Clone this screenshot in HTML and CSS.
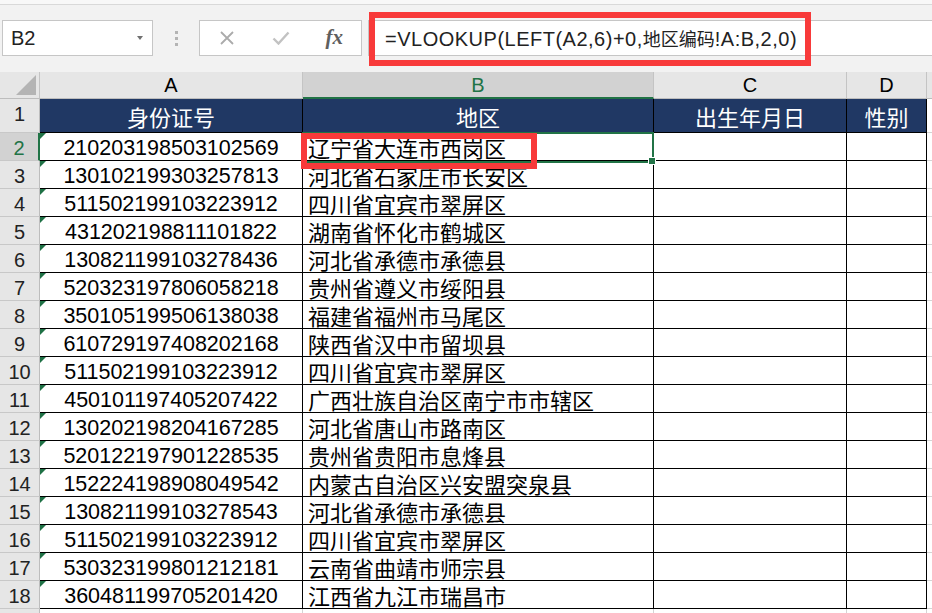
FILE: index.html
```html
<!DOCTYPE html>
<html lang="zh-CN">
<head>
    <meta charset="UTF-8">
    <title>VLOOKUP 地区编码</title>
    <link rel="stylesheet" href="styles.css">
</head>
<body>

<div class="ribbon-edge"></div>
<div class="toolbar">
    <div class="namebox"><span>B2</span><span class="caret"></span></div>
    <div class="grip"><i></i><i></i><i></i></div>
    <div class="fbuttons">
        <span class="fbtn">
            <svg width="16" height="16" viewBox="0 0 16 16"><path d="M2 2L14 14M14 2L2 14" stroke="#ababab" stroke-width="1.8" fill="none"/></svg>
        </span>
        <span class="fbtn">
            <svg width="18" height="14" viewBox="0 0 18 14"><path d="M1.5 7.5L6.5 12.5L16.5 1.5" stroke="#c2c2c2" stroke-width="2.4" fill="none"/></svg>
        </span>
        <span class="fbtn fx">fx</span>
    </div>
    <div class="formula">=VLOOKUP(LEFT(A2,6)+0,<span class="cjk">地区编码</span>!A:B,2,0)</div>
</div>

<div class="sheet">
    <div class="ch corner"></div>
    <div class="ch">A</div>
    <div class="ch sel">B</div>
    <div class="ch">C</div>
    <div class="ch">D</div>
    <div class="ch"></div>

    <div class="rh">1</div>
    <div class="t">身份证号</div>
    <div class="t">地区</div>
    <div class="t">出生年月日</div>
    <div class="t">性别</div>
    <div class="e"></div>

    <div class="rh sel">2</div>
    <div class="c num">210203198503102569</div>
    <div class="c loc">辽宁省大连市西岗区</div>
    <div class="c"></div><div class="c"></div><div class="e"></div>

    <div class="rh">3</div>
    <div class="c num">130102199303257813</div>
    <div class="c loc">河北省石家庄市长安区</div>
    <div class="c"></div><div class="c"></div><div class="e"></div>

    <div class="rh">4</div>
    <div class="c num">511502199103223912</div>
    <div class="c loc">四川省宜宾市翠屏区</div>
    <div class="c"></div><div class="c"></div><div class="e"></div>

    <div class="rh">5</div>
    <div class="c num">431202198811101822</div>
    <div class="c loc">湖南省怀化市鹤城区</div>
    <div class="c"></div><div class="c"></div><div class="e"></div>

    <div class="rh">6</div>
    <div class="c num">130821199103278436</div>
    <div class="c loc">河北省承德市承德县</div>
    <div class="c"></div><div class="c"></div><div class="e"></div>

    <div class="rh">7</div>
    <div class="c num">520323197806058218</div>
    <div class="c loc">贵州省遵义市绥阳县</div>
    <div class="c"></div><div class="c"></div><div class="e"></div>

    <div class="rh">8</div>
    <div class="c num">350105199506138038</div>
    <div class="c loc">福建省福州市马尾区</div>
    <div class="c"></div><div class="c"></div><div class="e"></div>

    <div class="rh">9</div>
    <div class="c num">610729197408202168</div>
    <div class="c loc">陕西省汉中市留坝县</div>
    <div class="c"></div><div class="c"></div><div class="e"></div>

    <div class="rh">10</div>
    <div class="c num">511502199103223912</div>
    <div class="c loc">四川省宜宾市翠屏区</div>
    <div class="c"></div><div class="c"></div><div class="e"></div>

    <div class="rh">11</div>
    <div class="c num">450101197405207422</div>
    <div class="c loc">广西壮族自治区南宁市市辖区</div>
    <div class="c"></div><div class="c"></div><div class="e"></div>

    <div class="rh">12</div>
    <div class="c num">130202198204167285</div>
    <div class="c loc">河北省唐山市路南区</div>
    <div class="c"></div><div class="c"></div><div class="e"></div>

    <div class="rh">13</div>
    <div class="c num">520122197901228535</div>
    <div class="c loc">贵州省贵阳市息烽县</div>
    <div class="c"></div><div class="c"></div><div class="e"></div>

    <div class="rh">14</div>
    <div class="c num">152224198908049542</div>
    <div class="c loc">内蒙古自治区兴安盟突泉县</div>
    <div class="c"></div><div class="c"></div><div class="e"></div>

    <div class="rh">15</div>
    <div class="c num">130821199103278543</div>
    <div class="c loc">河北省承德市承德县</div>
    <div class="c"></div><div class="c"></div><div class="e"></div>

    <div class="rh">16</div>
    <div class="c num">511502199103223912</div>
    <div class="c loc">四川省宜宾市翠屏区</div>
    <div class="c"></div><div class="c"></div><div class="e"></div>

    <div class="rh">17</div>
    <div class="c num">530323199801212181</div>
    <div class="c loc">云南省曲靖市师宗县</div>
    <div class="c"></div><div class="c"></div><div class="e"></div>

    <div class="rh">18</div>
    <div class="c num">360481199705201420</div>
    <div class="c loc">江西省九江市瑞昌市</div>
    <div class="c"></div><div class="c"></div><div class="e"></div>

    <div class="rh"></div>
    <div class="e"></div><div class="e"></div><div class="e"></div><div class="e"></div><div class="e"></div>
</div>

<!-- selection on B2 and the two red marks drawn over the sheet -->
<div class="selection"></div>
<div class="handle"></div>
<div class="mark mark-formula"></div>
<div class="mark mark-cell"></div>

</body>
</html>
```

FILE: styles.css
```css
html, body {
    margin: 0;
    overflow: hidden;
}
body {
    width: 932px;
    height: 613px;
    position: relative;
    background-color: #f2f2f2;
    font-family: "Liberation Sans", "Noto Sans CJK SC", sans-serif;
    color: #000;
}
.ribbon-edge {
    height: 4px;
    background-color: #f8f8f8;
    border-bottom: 1px solid #d9d9d9;
}
.toolbar {
    display: flex;
    align-items: flex-start;
    height: 67px;
    box-sizing: border-box;
    padding: 15px 0 0 2px;
}
.namebox {
    width: 151px;
    height: 36px;
    box-sizing: border-box;
    border: 1px solid #c6c6c6;
    background: #fff;
    display: flex;
    align-items: center;
    justify-content: space-between;
    padding: 0 9px 0 8px;
    font-size: 20px;
    color: #222;
}
.caret {
    width: 0;
    height: 0;
    border-left: 3px solid transparent;
    border-right: 3px solid transparent;
    border-top: 4px solid #707070;
}
.grip {
    width: 46px;
    height: 36px;
    display: flex;
    flex-direction: column;
    align-items: center;
    justify-content: center;
    gap: 3px;
}
.grip i {
    width: 3px;
    height: 3px;
    background: #b4b4b4;
}
.fbuttons {
    width: 163px;
    height: 36px;
    box-sizing: border-box;
    border: 1px solid #c6c6c6;
    background: #fff;
    display: flex;
}
.fbtn {
    width: 54px;
    display: flex;
    align-items: center;
    justify-content: center;
}
.fx {
    font-family: "Liberation Serif", serif;
    font-style: italic;
    font-weight: bold;
    font-size: 21px;
    color: #5f5f5f;
    padding-bottom: 2px;
}
.formula {
    flex: 1;
    height: 36px;
    margin-left: 6px;
    box-sizing: border-box;
    border: 1px solid #c6c6c6;
    border-right: none;
    background: #fff;
    padding-left: 16px;
    font-size: 20px;
    line-height: 34px;
    letter-spacing: 0.5px;
    color: #222;
    white-space: nowrap;
}
.formula .cjk {
    font-family: "Noto Sans CJK SC", sans-serif;
    font-size: 18px;
    letter-spacing: 0;
}

/* sheet grid */
.sheet {
    display: grid;
    grid-template-columns: 40px 263px 351px 193px 80px 100px;
    grid-template-rows: 27px 34px repeat(18, 28px);
    width: 1027px;
}
.sheet > div {
    box-sizing: border-box;
    white-space: nowrap;
    position: relative;
}
.ch {
    background: #e6e6e6;
    border-right: 1px solid #c4c4c4;
    border-bottom: 1px solid #bdbdbd;
    text-align: center;
    font-size: 20px;
    line-height: 26px;
}
.ch.sel {
    background: #d2d2d2;
    color: #217346;
    border-bottom: 2px solid #217346;
}
.corner::after {
    content: "";
    position: absolute;
    right: 3px;
    bottom: 3px;
    border-left: 20px solid transparent;
    border-bottom: 20px solid #b4b4b4;
}
.rh {
    background: #e6e6e6;
    border-right: 1px solid #bdbdbd;
    border-bottom: 1px solid #c8c8c8;
    text-align: center;
    font-size: 20px;
    line-height: 23px;
    padding-top: 4px;
    color: #222;
}
.rh.sel {
    background: #d2d2d2;
    color: #217346;
    border-right: 2px solid #217346;
}
.t {
    background: #203864;
    color: #fff;
    border-right: 1px solid #000;
    border-bottom: 1px solid #000;
    font-family: "Noto Sans CJK SC", sans-serif;
    font-size: 22px;
    line-height: 31px;
    padding-top: 2px;
    text-align: center;
}
.c {
    background: #fff;
    border-right: 1px solid #000;
    border-bottom: 1px solid #000;
}
.num {
    text-align: center;
    font-size: 21.5px;
    line-height: 23px;
    padding-top: 4px;
}
.num::before {
    content: "";
    position: absolute;
    top: 0;
    left: 0;
    border-top: 6px solid #1e7145;
    border-right: 6px solid transparent;
}
.loc {
    font-family: "Noto Sans CJK SC", sans-serif;
    font-size: 22px;
    line-height: 26px;
    padding: 1px 0 0 5px;
}
.e {
    background: #fff;
    border-right: 1px solid #d4d4d4;
    border-bottom: 1px solid #d4d4d4;
}

/* overlays */
.selection {
    position: absolute;
    left: 302px;
    top: 132px;
    width: 352px;
    height: 31px;
    box-sizing: border-box;
    border: 2px solid #217346;
}
.handle {
    position: absolute;
    left: 649px;
    top: 158px;
    width: 6px;
    height: 6px;
    background: #217346;
    outline: 1px solid #fff;
}
.mark {
    position: absolute;
    box-sizing: border-box;
    border: 6px solid #f83a3a;
}
.mark-formula {
    left: 369px;
    top: 12px;
    width: 442px;
    height: 54px;
}
.mark-cell {
    left: 301px;
    top: 133px;
    width: 236px;
    height: 36px;
}
```
